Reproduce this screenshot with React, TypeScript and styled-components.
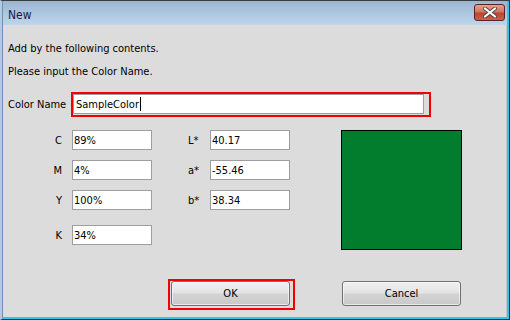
import React from "react";
import styled, { createGlobalStyle } from "styled-components";

const Global = createGlobalStyle`
  html, body { margin: 0; padding: 0; background: #dcdcdc; }
  body { font-family: "DejaVu Sans Condensed", "Liberation Sans", sans-serif; font-size: 11px; color: #000; }
`;

const Window = styled.div`
  box-sizing: border-box;
  width: 510px;
  height: 320px;
  border-top: 1px solid #3c3c3c;
  border-right: 1px solid #2a3a4c;
  border-bottom: 1px solid #2a3a4c;
  border-left: 2px solid #b2cbe4;
  display: flex;
`;

const Frame = styled.div`
  flex: 1;
  display: flex;
  flex-direction: column;
  border-left: 1px solid #6f8fb4;
  border-right: 2px solid #31c3ea;
  border-bottom: 2px solid #31c3ea;
  min-width: 0;
`;

const TitleBar = styled.div`
  height: 24px;
  flex: none;
  display: flex;
  align-items: center;
  justify-content: space-between;
  padding: 0 2px 0 5px;
  background: linear-gradient(to bottom, #9cb5d0 0%, #adc6e0 50%, #bdd5eb 100%);
`;

const Title = styled.span`
  font-size: 12px;
  color: #1b1b3a;
  margin-top: 3px;
`;

const CloseBtn = styled.div`
  box-sizing: border-box;
  width: 31px;
  height: 17px;
  margin-top: -2px;
  border: 1px solid #5b2222;
  border-radius: 3px;
  background: linear-gradient(to bottom, #e3a293 0%, #d27563 45%, #bc4532 55%, #c8614d 100%);
  display: flex;
  align-items: center;
  justify-content: center;
`;

const Body = styled.div`
  flex: 1;
  display: flex;
  flex-direction: column;
  padding: 0 0 0 5px;
  background: #dcdcdc;
  border-right: 1px solid #c6c6c6;
`;

const Message = styled.div<{ $top: number }>`
  line-height: 14px;
  height: 14px;
  margin-top: ${(p) => p.$top}px;
  white-space: nowrap;
`;

const NameRow = styled.div`
  display: flex;
  align-items: center;
  margin-top: 13px;
  height: 25px;
`;

const NameLabel = styled.span`
  width: 63px;
  flex: none;
`;

const Highlight = styled.div<{ $pr: number; $pl: number; $pb: number }>`
  border: 2px solid #f00000;
  padding: 0 ${(p) => p.$pr}px ${(p) => p.$pb}px ${(p) => p.$pl}px;
  display: flex;
`;

const TextBox = styled.div<{ $w: number }>`
  box-sizing: border-box;
  width: ${(p) => p.$w}px;
  height: 20px;
  background: #fff;
  border: 1px solid #9e9e9e;
  padding-left: 2px;
  display: flex;
  align-items: center;
  white-space: nowrap;
`;

const Caret = styled.span`
  display: inline-block;
  width: 1px;
  height: 14px;
  background: #000;
  margin-left: 1px;
`;

const Fields = styled.div`
  display: flex;
  align-items: flex-start;
  margin-top: 13px;
`;

const Column = styled.div`
  display: flex;
  flex-direction: column;
  gap: 10px;
`;

const FieldRow = styled.div<{ $extra?: number }>`
  display: flex;
  align-items: center;
  height: 20px;
  margin-top: ${(p) => p.$extra ?? 0}px;
`;

const FieldLabel = styled.span<{ $w: number; $align: "left" | "right"; $gap: number }>`
  width: ${(p) => p.$w}px;
  margin-right: ${(p) => p.$gap}px;
  text-align: ${(p) => p.$align};
  flex: none;
`;

const FieldBox = styled(TextBox)`
  padding-left: 1px;
`;

const LabColumn = styled(Column)`
  margin-left: 36px;
`;

const Swatch = styled.div<{ $color: string }>`
  box-sizing: border-box;
  width: 121px;
  height: 120px;
  margin-left: 51px;
  border: 1px solid #000;
  background: ${(p) => p.$color};
`;

const ButtonRow = styled.div`
  display: flex;
  align-items: flex-start;
  margin-top: 29px;
  padding-left: 160px;
`;

const Button = styled.div`
  box-sizing: border-box;
  width: 119px;
  height: 25px;
  border: 1px solid #707070;
  border-radius: 3px;
  background: linear-gradient(to bottom, #f0f0f0 0%, #e3e3e3 48%, #d4d4d4 52%, #c8c8c8 100%);
  box-shadow: inset 0 0 0 1px rgba(255,255,255,0.6);
  display: flex;
  align-items: center;
  justify-content: center;
  font-size: 11px;
`;

const CancelWrap = styled.div`
  margin-left: 47px;
  margin-top: 2px;
`;

const cmyk = [
  { k: "C", v: "89%", extra: 0 },
  { k: "M", v: "4%", extra: 0 },
  { k: "Y", v: "100%", extra: 0 },
  { k: "K", v: "34%", extra: 5 },
];

const lab = [
  { k: "L*", v: "40.17" },
  { k: "a*", v: "-55.46" },
  { k: "b*", v: "38.34" },
];

export default function App() {
  return (
    <>
      <Global />
      <Window>
        <Frame>
          <TitleBar>
            <Title>New</Title>
            <CloseBtn>
              <svg width="16" height="11" viewBox="0 0 16 11">
                <path d="M3 1.5 L13 9.5 M13 1.5 L3 9.5" stroke="#4a4a4a" strokeWidth="4" strokeLinecap="round" />
                <path d="M3 1.5 L13 9.5 M13 1.5 L3 9.5" stroke="#ffffff" strokeWidth="2.2" strokeLinecap="round" />
              </svg>
            </CloseBtn>
          </TitleBar>
          <Body>
            <Message $top={17}>Add by the following contents.</Message>
            <Message $top={9}>Please input the Color Name.</Message>
            <NameRow>
              <NameLabel>Color Name</NameLabel>
              <Highlight $pl={0} $pr={5} $pb={1}>
                <TextBox $w={351}>
                  SampleColor
                  <Caret />
                </TextBox>
              </Highlight>
            </NameRow>
            <Fields>
              <Column>
                {cmyk.map((f) => (
                  <FieldRow key={f.k} $extra={f.extra}>
                    <FieldLabel $w={54} $align="right" $gap={10}>{f.k}</FieldLabel>
                    <FieldBox $w={80}>{f.v}</FieldBox>
                  </FieldRow>
                ))}
              </Column>
              <LabColumn>
                {lab.map((f) => (
                  <FieldRow key={f.k}>
                    <FieldLabel $w={22} $align="left" $gap={0}>{f.k}</FieldLabel>
                    <FieldBox $w={80}>{f.v}</FieldBox>
                  </FieldRow>
                ))}
              </LabColumn>
              <Swatch $color="#027d2d" />
            </Fields>
            <ButtonRow>
              <Highlight $pl={1} $pr={3} $pb={2}>
                <Button>OK</Button>
              </Highlight>
              <CancelWrap>
                <Button>Cancel</Button>
              </CancelWrap>
            </ButtonRow>
          </Body>
        </Frame>
      </Window>
    </>
  );
}
